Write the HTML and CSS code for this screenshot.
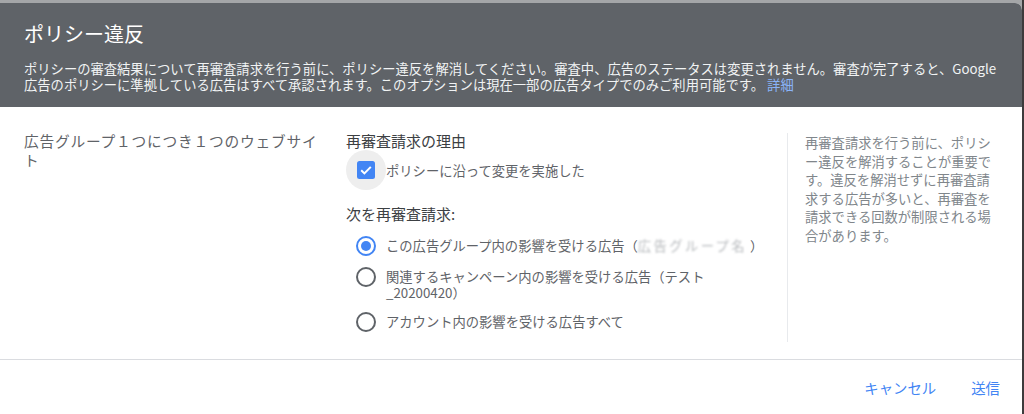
FILE: index.html
```html
<!DOCTYPE html>
<html lang="ja">
<head>
<meta charset="utf-8">
<title>ポリシー違反</title>
<link rel="stylesheet" href="styles.css">
</head>
<body>
<div class="dialog">
  <header class="dlg-header">
    <h1 class="dlg-title">ポリシー違反</h1>
    <p class="dlg-desc">ポリシーの審査結果について再審査請求を行う前に、ポリシー違反を解消してください。審査中、広告のステータスは変更されません。審査が完了すると、Google広告のポリシーに準拠している広告はすべて承認されます。このオプションは現在一部の広告タイプでのみご利用可能です。&nbsp;<a class="link" href="#">詳細</a></p>
  </header>
  <main class="dlg-body">
    <div class="col-left">広告グループ１つにつき１つのウェブサイト</div>
    <div class="col-mid">
      <div class="section-title">再審査請求の理由</div>
      <label class="check-row">
        <span class="check-ripple">
          <svg class="checkbox" width="18" height="18" viewBox="0 0 18 18"><rect x="0" y="0" width="18" height="18" rx="2.5" fill="#4285f4"/><path d="M4.2 9.3 L7.4 12.4 L13.8 5.9" fill="none" stroke="#fff" stroke-width="2"/></svg>
        </span>
        <span class="check-label">ポリシーに沿って変更を実施した</span>
      </label>
      <div class="section-title section-title--second">次を再審査請求:</div>
      <div class="radio-list">
        <label class="radio-row">
          <span class="radio radio--on"></span>
          <span class="radio-label">この広告グループ内の影響を受ける広告（<span class="redacted">広告グループ名</span> ）</span>
        </label>
        <label class="radio-row">
          <span class="radio"></span>
          <span class="radio-label">関連するキャンペーン内の影響を受ける広告（テスト_20200420）</span>
        </label>
        <label class="radio-row">
          <span class="radio"></span>
          <span class="radio-label">アカウント内の影響を受ける広告すべて</span>
        </label>
      </div>
    </div>
    <aside class="col-help">再審査請求を行う前に、ポリシー違反を解消することが重要です。違反を解消せずに再審査請求する広告が多いと、再審査を請求できる回数が制限される場合があります。</aside>
  </main>
  <footer class="dlg-footer">
    <button class="btn">キャンセル</button>
    <button class="btn">送信</button>
  </footer>
</div>
</body>
</html>
```
FILE: styles.css
```css
* { box-sizing: border-box; }
html, body {
  margin: 0;
  padding: 0;
  height: 100%;
}
body {
  background: linear-gradient(to right, #a4a6a8 1022px, #3d3b3c 1022px);
  font-family: "Noto Sans CJK JP", "Noto Sans", sans-serif;
  overflow: hidden;
}
.dialog {
  margin-top: 3px;
  width: 1022px;
  min-height: 411px;
  background: #ffffff;
  border-top-right-radius: 7px;
  overflow: hidden;
}
.dlg-header {
  background: #5f6368;
  color: #ffffff;
  padding: 17px 16px 14px 24px;
}
.dlg-title {
  margin: 0;
  font-size: 20px;
  line-height: 28px;
  font-weight: 400;
}
.dlg-desc {
  margin: 13px 0 0 0;
  font-size: 13.3px;
  line-height: 16px;
  color: #f1f3f4;
}
.link {
  color: #8ab4f8;
  text-decoration: none;
}
.dlg-body {
  display: flex;
  align-items: stretch;
  padding: 24px 24px 17px 24px;
  border-bottom: 1px solid #dadce0;
}
.col-left {
  flex: 0 0 298px;
  margin-right: 24px;
  font-size: 14.7px;
  letter-spacing: 0.8px;
  line-height: 19px;
  color: #5f6368;
}
.col-mid {
  flex: 0 0 424px;
  padding-bottom: 10px;
}
.section-title {
  font-size: 15px;
  line-height: 19px;
  color: #3c4043;
}
.section-title--second {
  margin-top: 14px;
}
.check-row {
  display: flex;
  align-items: center;
  height: 40px;
}
.check-ripple {
  width: 40px;
  height: 40px;
  border-radius: 50%;
  background: #eeeeee;
  display: flex;
  align-items: center;
  justify-content: center;
}
.checkbox { display: block; }
.check-label {
  font-size: 13.3px;
  line-height: 16px;
  color: #5f6368;
  padding-top: 1px;
}
.radio-list {
  margin-top: 13px;
  display: flex;
  flex-direction: column;
  gap: 11px;
}
.radio-row {
  display: flex;
  align-items: flex-start;
}
.radio {
  flex: 0 0 20px;
  width: 20px;
  height: 20px;
  margin-left: 10px;
  margin-right: 10px;
  border: 2px solid #5f6368;
  border-radius: 50%;
  position: relative;
}
.radio--on {
  border-color: #4285f4;
}
.radio--on::after {
  content: "";
  position: absolute;
  left: 3px;
  top: 3px;
  width: 10px;
  height: 10px;
  border-radius: 50%;
  background: #4285f4;
}
.radio-label {
  font-size: 13.3px;
  line-height: 16px;
  color: #5f6368;
  padding-top: 2px;
  flex: 1 1 auto;
}
.redacted {
  letter-spacing: 2.4px;
  color: #b8bbbe;
  filter: blur(0.8px);
}
.col-help {
  flex: 1 1 auto;
  margin-left: 17px;
  margin-top: 2px;
  border-left: 1px solid #e8eaed;
  padding: 1px 0 0 17px;
  font-size: 13.3px;
  line-height: 18.5px;
  color: #80868b;
}
.dlg-footer {
  display: flex;
  justify-content: flex-end;
  gap: 35px;
  padding: 18px 22px 0 0;
}
.btn {
  background: none;
  border: 0;
  padding: 0;
  margin: 0;
  font-family: inherit;
  font-size: 14.4px;
  line-height: 20px;
  color: #4285f4;
  cursor: pointer;
}
```
